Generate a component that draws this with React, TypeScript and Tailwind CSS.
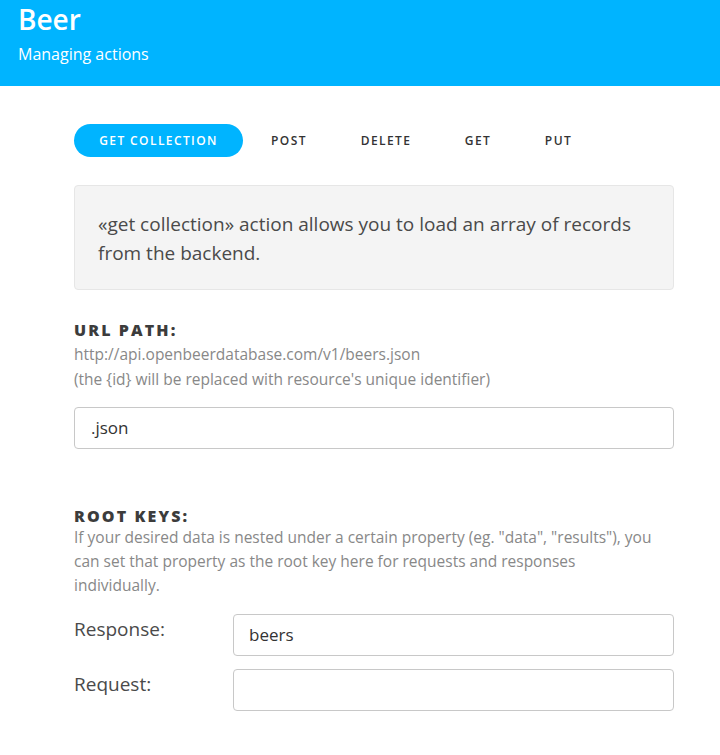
import React from "react";

const font = { fontFamily: "'Open Sans', Lato, sans-serif" };

const tabs: { label: string; w: string }[] = [
  { label: "POST", w: "w-[92px]" },
  { label: "DELETE", w: "w-[102px]" },
  { label: "GET", w: "w-[82px]" },
  { label: "PUT", w: "w-[79px]" },
];

export default function App() {
  return (
    <div className="w-[720px] h-[755px] bg-white overflow-hidden" style={font}>
      <header className="bg-[#00b4ff] h-[86px] px-[18px] pt-[1px]">
        <h1 className="text-white text-[28px] font-semibold leading-[36px]">Beer</h1>
        <p className="text-white text-[16px] leading-[20px] mt-[7px]">Managing actions</p>
      </header>
      <main className="w-[600px] ml-[74px]">
        <nav className="flex items-center mt-[38px] h-[33px]">
          <button className="h-[33px] w-[169px] rounded-full bg-[#00b4ff] text-white text-[12px] font-semibold tracking-[1.4px]">
            GET COLLECTION
          </button>
          {tabs.map((t) => (
            <span
              key={t.label}
              className={"text-center text-[12px] font-semibold tracking-[1.4px] text-[#333] " + t.w}
            >
              {t.label}
            </span>
          ))}
        </nav>
        <div className="mt-[28px] h-[105px] rounded-[4px] border border-[#e6e6e6] bg-[#f4f4f4] px-[23px] pt-[24px] text-[19px] leading-[29px] text-[#4a4a4a]">
          «get collection» action allows you to load an array of records from the backend.
        </div>
        <section className="mt-[30px]">
          <h2 className="text-[16px] font-extrabold tracking-[2.1px] text-[#3c3c3c] leading-[20px]">URL PATH:</h2>
          <p className="text-[15.5px] text-[#888] leading-[25px] mt-[2px]">
            http://api.openbeerdatabase.com/v1/beers.json
            <br />
            (the {"{id}"} will be replaced with resource's unique identifier)
          </p>
          <div className="mt-[15px] h-[42px] rounded-[4px] border border-[#c8c8c8] flex items-center px-[16px] text-[17px] text-[#333]">
            .json
          </div>
        </section>
        <section className="mt-[57px]">
          <h2 className="text-[16px] font-extrabold tracking-[2.1px] text-[#3c3c3c] leading-[20px]">ROOT KEYS:</h2>
          <p className="text-[15.5px] text-[#888] leading-[24px] mt-[-1px]">
            If your desired data is nested under a certain property (eg. "data", "results"), you can set that property as the root key here for requests and responses
            <br />
            individually.
          </p>
          <div className="flex mt-[17px]">
            <label className="w-[159px] text-[19px] text-[#4a4a4a] leading-[30px]">Response:</label>
            <div className="flex-1 h-[42px] rounded-[4px] border border-[#c8c8c8] flex items-center px-[15px] text-[17px] text-[#333]">
              beers
            </div>
          </div>
          <div className="flex mt-[13px]">
            <label className="w-[159px] text-[19px] text-[#4a4a4a] leading-[30px]">Request:</label>
            <div className="flex-1 h-[42px] rounded-[4px] border border-[#c8c8c8]" />
          </div>
        </section>
      </main>
    </div>
  );
}
